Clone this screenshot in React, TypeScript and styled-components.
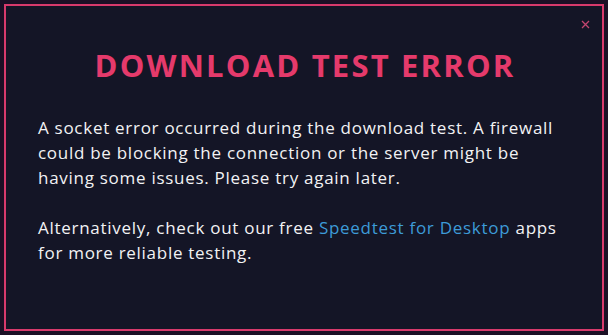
import React from "react";
import styled, { createGlobalStyle } from "styled-components";

const Global = createGlobalStyle`
  html, body { margin: 0; padding: 0; background: #1b1025; }
  body { width: 608px; height: 335px; overflow: hidden; }
`;

const Page = styled.div`
  width: 608px;
  height: 335px;
  box-sizing: border-box;
  padding: 4px;
  background: #1b1025;
`;

const Modal = styled.div`
  position: relative;
  box-sizing: border-box;
  height: 327px;
  border: 2px solid #d83a6c;
  background: #141526;
  padding: 37px 30px 0 32px;
  font-family: "Open Sans", sans-serif;
`;

const Close = styled.button`
  position: absolute;
  top: 11px;
  right: 10px;
  width: 14px;
  height: 14px;
  padding: 0;
  border: 0;
  background: transparent;
  display: flex;
  align-items: center;
  justify-content: center;
  cursor: pointer;
`;

const Title = styled.h1`
  margin: 0 0 28px;
  text-align: center;
  color: #e53a6b;
  font-family: "Open Sans", sans-serif;
  font-weight: 700;
  font-size: 31px;
  line-height: 44px;
  letter-spacing: 2.2px;
`;

const Paragraph = styled.p`
  margin: 0 0 25px;
  color: #f2f2f4;
  font-size: 17px;
  line-height: 25px;
  font-weight: 500;
  letter-spacing: 0.72px;
`;

const Link = styled.a`
  color: #3d9bd8;
  text-decoration: none;
`;

export default function App() {
  return (
    <>
      <Global />
      <Page>
        <Modal>
          <Close aria-label="Close">
            <svg width="9" height="9" viewBox="0 0 9 9">
              <path d="M1 1L8 8M8 1L1 8" stroke="#c2456f" strokeWidth="1.3" />
            </svg>
          </Close>
          <Title>DOWNLOAD TEST ERROR</Title>
          <Paragraph>
            A socket error occurred during the download test. A firewall could be blocking the
            connection or the server might be having some issues. Please try again later.
          </Paragraph>
          <Paragraph>
            Alternatively, check out our free <Link href="#">Speedtest for Desktop</Link> apps for
            more reliable testing.
          </Paragraph>
        </Modal>
      </Page>
    </>
  );
}
